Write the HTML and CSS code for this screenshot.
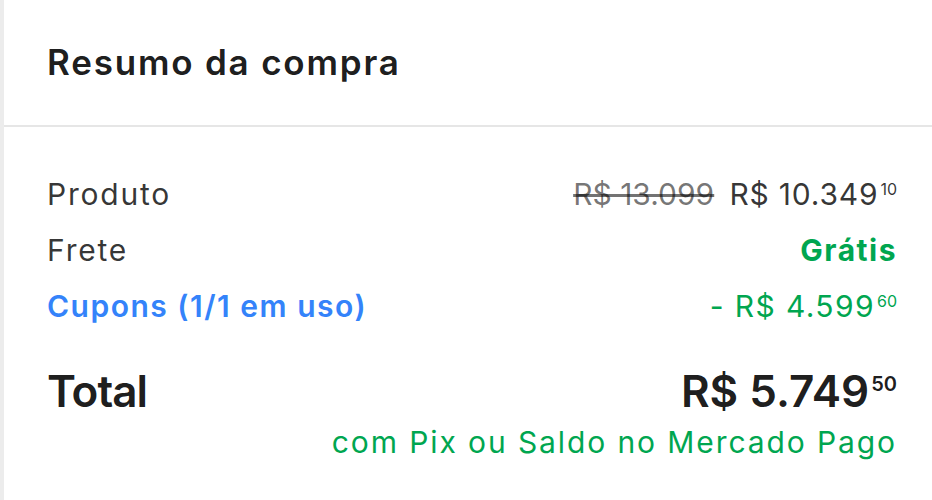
FILE: index.html
```html
<!DOCTYPE html>
<html lang="pt-BR">
<head>
    <meta charset="UTF-8">
    <meta name="viewport" content="width=device-width, initial-scale=1.0">
    <title>Resumo da compra</title>
    <link rel="stylesheet" href="styles.css">
</head>
<body>

    <div class="summary">
        <div class="summary-header">
            <h2>Resumo da compra</h2>
        </div>

        <div class="summary-body">
            <div class="row">
                <span class="label">Produto</span>
                <span class="value">
                    <s class="old-price">R$ 13.099</s>
                    <span class="price">R$ 10.349<sup class="cents">10</sup></span>
                </span>
            </div>
            <div class="row">
                <span class="label">Frete</span>
                <span class="value free">Grátis</span>
            </div>
            <div class="row">
                <a class="label coupons" href="#">Cupons (1/1 em uso)</a>
                <span class="value discount">- R$ 4.599<sup class="cents">60</sup></span>
            </div>

            <div class="row total">
                <span class="label">Total</span>
                <span class="value">R$ 5.749<sup class="cents">50</sup></span>
            </div>
            <p class="pix-note">com Pix ou Saldo no Mercado Pago</p>
        </div>
    </div>

</body>
</html>
```

FILE: styles.css
```css
body {
    margin: 0;
    background-color: #fff;
    font-family: 'Inter', 'Liberation Sans', sans-serif;
    color: rgba(0, 0, 0, 0.9);
}
.summary {
    background-color: #fff;
    border-left: 4px solid #ececec;
    min-height: 500px;
}
.summary-header {
    padding: 40px 35px 41px 43px;
    border-bottom: 2px solid #e6e6e6;
}
.summary-header h2 {
    margin: 0;
    font-size: 35px;
    line-height: 44px;
    font-weight: 600;
    letter-spacing: 1.8px;
}
.summary-body {
    padding: 39px 35px 0 43px;
}
.row {
    display: flex;
    justify-content: space-between;
    align-items: baseline;
    font-size: 30px;
    line-height: 56px;
    color: rgba(0, 0, 0, 0.8);
}
.label {
    text-decoration: none;
    letter-spacing: 1.8px;
}
.coupons {
    color: #3483fa;
    font-weight: 600;
    letter-spacing: 1.5px;
}
.value {
    letter-spacing: 0.8px;
}
.old-price {
    color: rgba(0, 0, 0, 0.55);
    letter-spacing: 0;
    margin-right: 6px;
}
.cents {
    font-size: 16px;
    line-height: 1;
    vertical-align: 10px;
    margin-left: 2px;
    letter-spacing: 0;
}
.free {
    color: #00a650;
    font-weight: 700;
    letter-spacing: 1.5px;
}
.discount {
    color: #00a650;
    letter-spacing: 1.4px;
}
.total {
    margin-top: 29px;
    font-size: 44px;
    font-weight: 600;
    color: rgba(0, 0, 0, 0.9);
}
.total .label {
    letter-spacing: -1px;
}
.total .value {
    letter-spacing: 0;
}
.total .cents {
    font-size: 20px;
    vertical-align: 16px;
}
.pix-note {
    margin: 3px 0 0;
    text-align: right;
    font-size: 30px;
    line-height: 40px;
    letter-spacing: 1.9px;
    color: #00a650;
}
```
